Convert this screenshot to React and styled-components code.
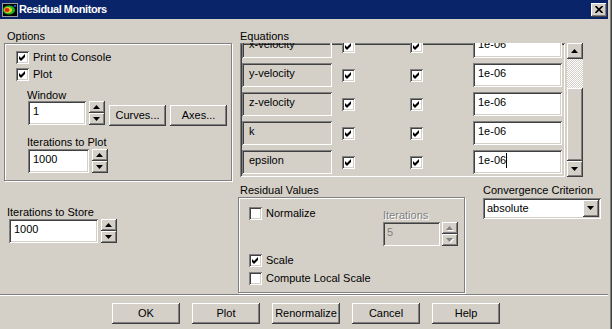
import React from 'react';
import styled, { createGlobalStyle, css } from 'styled-components';

const C = {
  face: '#D4D0C8',
  light: '#FFFFFF',
  shadow: '#808080',
  dark: '#404040',
  title: '#0A246A',
};

const Global = createGlobalStyle`
  html, body { margin: 0; padding: 0; background: ${C.face}; }
  body {
    font-family: "Liberation Sans", Arial, sans-serif;
    font-size: 11px;
    color: #000;
  }
  * { box-sizing: border-box; }
`;

const raised = css`
  background: ${C.face};
  box-shadow: inset -1px -1px ${C.dark}, inset 1px 1px ${C.light},
    inset -2px -2px ${C.shadow}, inset 2px 2px ${C.face};
`;

const sunken = css`
  box-shadow: inset 1px 1px ${C.shadow}, inset -1px -1px ${C.light},
    inset 2px 2px ${C.dark}, inset -2px -2px ${C.face};
`;

const etched = css`
  border: 1px solid ${C.shadow};
  box-shadow: inset 1px 1px ${C.light}, 1px 1px ${C.light};
`;

const Window = styled.div`
  width: 612px;
  height: 329px;
  display: flex;
  flex-direction: column;
  padding-right: 4px;
  background: ${C.face};
  box-shadow: inset -1px 0 ${C.dark}, inset -2px 0 ${C.shadow};
  overflow: hidden;
`;

const TitleBar = styled.div`
  height: 19px;
  display: flex;
  align-items: center;
  background: ${C.title};
  color: #fff;
  padding: 0 1px 0 2px;
`;

const TitleText = styled.span`
  font-weight: bold;
  font-size: 11px;
  letter-spacing: -0.45px;
  line-height: 19px;
  margin-left: 1px;
`;

const CloseButton = styled.div`
  ${raised};
  width: 16px;
  height: 14px;
  margin-left: auto;
  display: flex;
  align-items: center;
  justify-content: center;
`;

const Body = styled.div`
  display: flex;
  flex-direction: column;
  padding-top: 11px;
`;

const Main = styled.div`
  display: grid;
  grid-template-columns: 228px 366px;
  column-gap: 6px;
  padding-left: 4px;
`;

const Column = styled.div`
  display: flex;
  flex-direction: column;
`;

const GroupLabel = styled.div`
  line-height: 13px;
  height: 13px;
  padding-left: ${(p) => p.$indent ?? 2}px;
  white-space: nowrap;
`;

const OptionsBox = styled.div`
  ${etched};
  height: 138px;
  padding: 7px 0 0 11px;
  display: flex;
  flex-direction: column;
`;

const CheckLine = styled.label`
  display: flex;
  align-items: center;
  gap: 4px;
  height: 13px;
  line-height: 13px;
  margin-top: ${(p) => p.$top ?? 0}px;
  white-space: nowrap;
`;

const Box = styled.span`
  ${sunken};
  background: #fff;
  width: 13px;
  height: 13px;
  flex: none;
  display: inline-flex;
`;

const SubBlock = styled.div`
  display: flex;
  flex-direction: column;
  margin-left: ${(p) => p.$left ?? 11}px;
`;

const FieldLabel = styled.div`
  line-height: 12px;
  height: 12px;
  margin-top: ${(p) => p.$top ?? 0}px;
  padding-left: ${(p) => p.$indent ?? 0}px;
  white-space: nowrap;
  color: ${(p) => (p.$disabled ? C.shadow : '#000')};
  text-shadow: ${(p) => (p.$disabled ? `1px 1px ${C.light}` : 'none')};
`;

const InlineRow = styled.div`
  display: flex;
  align-items: flex-start;
  margin-top: ${(p) => p.$top ?? 0}px;
  margin-left: ${(p) => p.$left ?? 0}px;
`;

const Field = styled.div`
  ${sunken};
  background: ${(p) => (p.$disabled ? C.face : '#fff')};
  color: ${(p) => (p.$disabled ? C.shadow : '#000')};
  width: ${(p) => p.$width}px;
  height: 24px;
  flex: none;
  padding: 4px 0 0 ${(p) => p.$pad ?? 5}px;
  line-height: 13px;
  white-space: nowrap;
  display: flex;
  align-items: flex-start;
`;

const Caret = styled.span`
  display: inline-block;
  width: 1px;
  height: 15px;
  background: #000;
  margin-top: -1px;
`;

const SpinBox = styled.div`
  display: flex;
  flex-direction: column;
  width: 16px;
  height: 24px;
  margin-left: ${(p) => p.$left ?? 3}px;
  flex: none;
`;

const SpinButton = styled.div`
  ${raised};
  height: 12px;
  display: flex;
  align-items: center;
  justify-content: center;
`;

const PushButton = styled.div`
  ${raised};
  width: ${(p) => p.$width}px;
  height: 21px;
  line-height: 21px;
  text-align: center;
  flex: none;
  margin-left: ${(p) => p.$left ?? 0}px;
  margin-top: ${(p) => p.$top ?? 0}px;
  white-space: nowrap;
`;

const ListRow = styled.div`
  display: flex;
  height: 134px;
`;

const ListFrame = styled.div`
  ${sunken};
  width: 325px;
  height: 134px;
  margin-left: 2px;
  padding: 2px;
  overflow: hidden;
`;

const ListContent = styled.div`
  display: flex;
  flex-direction: column;
  gap: 5px;
  margin-top: -11px;
`;

const EqRow = styled.div`
  display: flex;
  align-items: center;
  height: 24px;
`;

const EqLabel = styled.div`
  ${sunken};
  width: 90px;
  height: 24px;
  padding: 4px 0 0 7px;
  line-height: 13px;
  flex: none;
  white-space: nowrap;
`;

const Cell = styled.div`
  margin-left: ${(p) => p.$left}px;
  display: flex;
`;

const ScrollBar = styled.div`
  width: 16px;
  height: 134px;
  margin-left: 2px;
  display: flex;
  flex-direction: column;
`;

const ScrollButton = styled.div`
  ${raised};
  width: 16px;
  height: 16px;
  flex: none;
  display: flex;
  align-items: center;
  justify-content: center;
`;

const Track = styled.div`
  flex: 1;
  background-color: #fff;
  background-image: repeating-conic-gradient(${C.face} 0 25%, #fff 0 50%);
  background-size: 2px 2px;
`;

const Thumb = styled.div`
  ${raised};
  height: 73px;
  flex: none;
`;

const BottomRow = styled.div`
  display: flex;
  margin-top: 7px;
`;

const ResidualGroup = styled.div`
  display: flex;
  flex-direction: column;
  width: 227px;
`;

const ResidualBox = styled.div`
  ${etched};
  height: 96px;
  padding: 9px 6px 0 10px;
  display: flex;
  flex-direction: column;
`;

const SplitRow = styled.div`
  display: flex;
  justify-content: space-between;
  align-items: flex-start;
`;

const ConvergenceGroup = styled.div`
  display: flex;
  flex-direction: column;
  margin-left: 18px;
  width: 118px;
`;

const Select = styled.div`
  ${sunken};
  background: #fff;
  height: 21px;
  margin-top: 1px;
  display: flex;
  padding: 2px;
`;

const SelectText = styled.div`
  flex: 1;
  line-height: 17px;
  padding-left: 2px;
`;

const DropButton = styled.div`
  ${raised};
  width: 16px;
  height: 17px;
  display: flex;
  align-items: center;
  justify-content: center;
`;

const Separator = styled.div`
  height: 2px;
  margin-top: 1px;
  border-top: 1px solid ${C.shadow};
  border-bottom: 1px solid ${C.light};
`;

const ButtonRow = styled.div`
  display: flex;
  justify-content: center;
  gap: 12px;
  margin-top: 7px;
  padding-left: 4px;
`;

const Arrow = ({ down, disabled, w = 7, h = 4 }) => {
  const pts = down ? `0,0 ${w},0 ${w / 2},${h}` : `0,${h} ${w},${h} ${w / 2},0`;
  return (
    <svg width={w + 1} height={h + 1} viewBox={`0 0 ${w + 1} ${h + 1}`}>
      {disabled && <polygon points={pts} fill={C.light} transform="translate(1,1)" />}
      <polygon points={pts} fill={disabled ? C.shadow : '#000'} />
    </svg>
  );
};

const Spinner = ({ left, disabled }) => (
  <SpinBox $left={left}>
    <SpinButton>
      <Arrow disabled={disabled} />
    </SpinButton>
    <SpinButton>
      <Arrow down disabled={disabled} />
    </SpinButton>
  </SpinBox>
);

const CheckBox = ({ checked }) => (
  <Box>
    {checked && (
      <svg width="13" height="13" viewBox="0 0 13 13">
        <polygon points="3,5 5,7 9,3 9,6 5,10 3,8" fill="#000" />
      </svg>
    )}
  </Box>
);

const Check = ({ checked, label, top }) => (
  <CheckLine $top={top}>
    <CheckBox checked={checked} />
    <span>{label}</span>
  </CheckLine>
);

const TitleIcon = () => (
  <svg width="16" height="16" viewBox="0 0 16 16">
    <rect x="0.5" y="1.5" width="15" height="13" fill="#000" stroke="#9a9a9a" />
    <ellipse cx="7" cy="8" rx="6" ry="4.5" fill="#1fae2a" />
    <ellipse cx="6" cy="8" rx="4" ry="3" fill="#d8d020" />
    <ellipse cx="5" cy="8" rx="2.5" ry="2" fill="#e02010" />
    <rect x="12" y="3" width="2" height="2" fill="#2050d0" />
  </svg>
);

const equations = ['x-velocity', 'y-velocity', 'z-velocity', 'k', 'epsilon'];

export default function App() {
  return (
    <>
      <Global />
      <Window>
        <TitleBar>
          <TitleIcon />
          <TitleText>Residual Monitors</TitleText>
          <CloseButton>
            <svg width="8" height="7" viewBox="0 0 8 7">
              <path d="M0.5 0 L7.5 7 M7.5 0 L0.5 7" stroke="#000" strokeWidth="1.6" />
            </svg>
          </CloseButton>
        </TitleBar>
        <Body>
          <Main>
            <Column>
              <GroupLabel $indent={3}>Options</GroupLabel>
              <OptionsBox>
                <Check checked label="Print to Console" />
                <Check checked label="Plot" top={4} />
                <SubBlock>
                  <FieldLabel $top={8}>Window</FieldLabel>
                  <InlineRow $left={1}>
                    <Field $width={58}>1</Field>
                    <Spinner />
                    <PushButton $width={57} $left={4} $top={4}>Curves...</PushButton>
                    <PushButton $width={57} $left={4} $top={4}>Axes...</PushButton>
                  </InlineRow>
                  <FieldLabel $top={10}>Iterations to Plot</FieldLabel>
                  <InlineRow $top={1} $left={1}>
                    <Field $width={61}>1000</Field>
                    <Spinner />
                  </InlineRow>
                </SubBlock>
              </OptionsBox>
              <FieldLabel $top={25} $indent={3}>Iterations to Store</FieldLabel>
              <InlineRow $top={1} $left={5}>
                <Field $width={89}>1000</Field>
                <Spinner />
              </InlineRow>
            </Column>
            <Column>
              <GroupLabel>Equations</GroupLabel>
              <ListRow>
                <ListFrame>
                  <ListContent>
                    {equations.map((name, i) => (
                      <EqRow key={name}>
                        <EqLabel>{name}</EqLabel>
                        <Cell $left={10}>
                          <CheckBox checked />
                        </Cell>
                        <Cell $left={55}>
                          <CheckBox checked />
                        </Cell>
                        <Cell $left={50}>
                          <Field $width={89} $pad={5}>
                            1e-06
                            {i === equations.length - 1 && <Caret />}
                          </Field>
                        </Cell>
                      </EqRow>
                    ))}
                  </ListContent>
                </ListFrame>
                <ScrollBar>
                  <ScrollButton>
                    <Arrow />
                  </ScrollButton>
                  <Track />
                  <Thumb />
                  <ScrollButton>
                    <Arrow down />
                  </ScrollButton>
                </ScrollBar>
              </ListRow>
              <BottomRow>
                <ResidualGroup>
                  <GroupLabel>Residual Values</GroupLabel>
                  <ResidualBox>
                    <SplitRow>
                      <Check label="Normalize" />
                      <SubBlock $left={0}>
                        <FieldLabel $top={2} $disabled>Iterations</FieldLabel>
                        <InlineRow $top={1}>
                          <Field $width={57} $pad={4} $disabled>5</Field>
                          <Spinner left={2} disabled />
                        </InlineRow>
                      </SubBlock>
                    </SplitRow>
                    <Check checked label="Scale" top={8} />
                    <Check label="Compute Local Scale" top={5} />
                  </ResidualBox>
                </ResidualGroup>
                <ConvergenceGroup>
                  <GroupLabel $indent={0}>Convergence Criterion</GroupLabel>
                  <Select>
                    <SelectText>absolute</SelectText>
                    <DropButton>
                      <Arrow down />
                    </DropButton>
                  </Select>
                </ConvergenceGroup>
              </BottomRow>
            </Column>
          </Main>
          <Separator />
          <ButtonRow>
            <PushButton $width={68}>OK</PushButton>
            <PushButton $width={68}>Plot</PushButton>
            <PushButton $width={68}>Renormalize</PushButton>
            <PushButton $width={68}>Cancel</PushButton>
            <PushButton $width={68}>Help</PushButton>
          </ButtonRow>
        </Body>
      </Window>
    </>
  );
}
